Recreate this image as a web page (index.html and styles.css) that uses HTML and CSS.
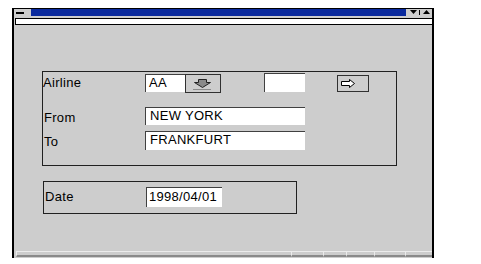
FILE: index.html
```html
<!DOCTYPE html>
<html>
<head>
<meta charset="utf-8">
<link rel="stylesheet" href="styles.css">
</head>
<body>
<div class="window">
  <div class="titlebar">
    <div class="sysbox"><span class="dash"></span></div>
    <div class="caption"></div>
    <div class="sizebtns">
      <svg width="26" height="7" viewBox="0 0 26 7"><polygon points="4,1 11,1 7.5,5" fill="#000"/><rect x="13" y="1" width="1" height="5" fill="#000"/><polygon points="17,5 24,5 20.5,1" fill="#000"/></svg>
    </div>
  </div>
  <div class="menubar"></div>

  <div class="group group-flight">
    <div class="row row-airline">
      <div class="label">Airline</div>
      <div class="field field-code">AA</div>
      <div class="btn btn-drop">
        <svg width="20" height="12" viewBox="0 0 20 12"><polygon points="5.5,0.5 13.5,0.5 13.5,3.5 17.5,3.5 9.5,8.5 1.5,3.5 5.5,3.5" fill="#8a8a8a" stroke="#202020" stroke-width="1"/><rect x="0" y="10" width="18" height="1" fill="#8a8a8a"/></svg>
      </div>
      <div class="field field-extra"></div>
      <div class="btn btn-next">
        <svg width="16" height="10" viewBox="0 0 16 10"><polygon points="0.5,2.5 8.5,2.5 8.5,0.5 13.5,4.5 8.5,8.5 8.5,6.5 0.5,6.5" fill="#fff" stroke="#000" stroke-width="1"/></svg>
      </div>
    </div>
    <div class="row row-from">
      <div class="label label-low">From</div>
      <div class="field field-city">NEW YORK</div>
    </div>
    <div class="row row-to">
      <div class="label label-low">To</div>
      <div class="field field-city field-tall">FRANKFURT</div>
    </div>
  </div>

  <div class="group group-date">
    <div class="row row-date">
      <div class="label label-date">Date</div>
      <div class="field field-date">1998/04/01</div>
    </div>
  </div>

  <div class="statusbar">
    <div class="seg seg-main"></div>
    <div class="seg s2"></div>
    <div class="seg s3"></div>
    <div class="seg s4"></div>
    <div class="seg s5"></div>
    <div class="seg s6"></div>
  </div>
</div>
</body>
</html>
```

FILE: styles.css
```css
* { box-sizing: border-box; }
html, body { margin: 0; padding: 0; background: #fff; }
body {
  font-family: "Liberation Sans", Arial, sans-serif;
  font-size: 13px;
  letter-spacing: 0.3px;
  color: #000;
}
.window {
  margin: 8px 0 0 12px;
  width: 422px;
  height: 250px;
  background: #cdcdcd;
  border-top: 1px solid #000;
  border-left: 2px solid #000;
  border-right: 2px solid #000;
  display: flex;
  flex-direction: column;
}
.titlebar {
  display: flex;
  height: 7px;
}
.sysbox {
  width: 17px;
}
.sysbox .dash {
  display: block;
  margin: 3px 0 0 2px;
  width: 8px;
  height: 2px;
  background: #000;
}
.caption {
  flex: 1;
  background: #0a2a9e;
}
.sizebtns {
  width: 26px;
  display: flex;
  align-items: center;
}
.sizebtns svg { display: block; }
.menubar {
  margin: 2px -1px 0 1px;
  height: 7px;
  background: #fff;
  border: 1px solid #000;
}
.group {
  border: 1px solid #202020;
}
.group-flight {
  margin: 46px 0 0 28px;
  width: 355px;
  height: 95px;
}
.group-date {
  margin: 15px 0 0 29px;
  width: 254px;
  height: 33px;
}
.row {
  display: flex;
  align-items: flex-start;
}
.row-airline { margin-top: 1px; height: 20px; }
.row-from { margin-top: 14px; height: 18px; }
.row-to { margin-top: 6px; height: 19px; }
.label {
  width: 102px;
  line-height: 20px;
  flex: none;
}
.label-low { padding: 2px 0 0 1px; line-height: 18px; }
.field {
  background: #fff;
  border-top: 1px solid #404040;
  border-left: 1px solid #404040;
  padding-left: 4px;
  line-height: 16px;
  flex: none;
}
.field-code { width: 40px; height: 18px; margin-top: 1px; padding-left: 3px; }
.field-extra { width: 41px; height: 19px; margin-left: 43px; }
.field-city { width: 160px; height: 18px; }
.field-tall { height: 19px; }
.btn {
  flex: none;
  border: 1px solid #303030;
  display: flex;
  align-items: center;
  justify-content: center;
}
.btn svg { display: block; }
.btn-drop { width: 36px; height: 19px; margin-top: 1px; padding-top: 3px; }
.btn-next { width: 32px; height: 17px; margin-left: 32px; margin-top: 2px; justify-content: flex-start; padding-left: 3px; }
.row-date { margin-top: 5px; }
.label-date { padding-left: 1px; line-height: 20px; }
.field-date { width: 76px; height: 20px; line-height: 18px; padding-left: 2px; }
.statusbar {
  margin-top: auto;
  margin-left: 2px;
  margin-bottom: 1px;
  height: 6px;
  display: flex;
}
.seg {
  height: 6px;
  border-top: 1px solid #ececec;
  border-left: 1px solid #ececec;
  border-bottom: 2px solid #8a8a8a;
  flex: none;
}
.seg-main { width: 275px; }
.s2 { width: 32px; }
.s3 { width: 23px; }
.s4 { width: 28px; }
.s5 { width: 31px; }
.s6 { width: 27px; }
```
